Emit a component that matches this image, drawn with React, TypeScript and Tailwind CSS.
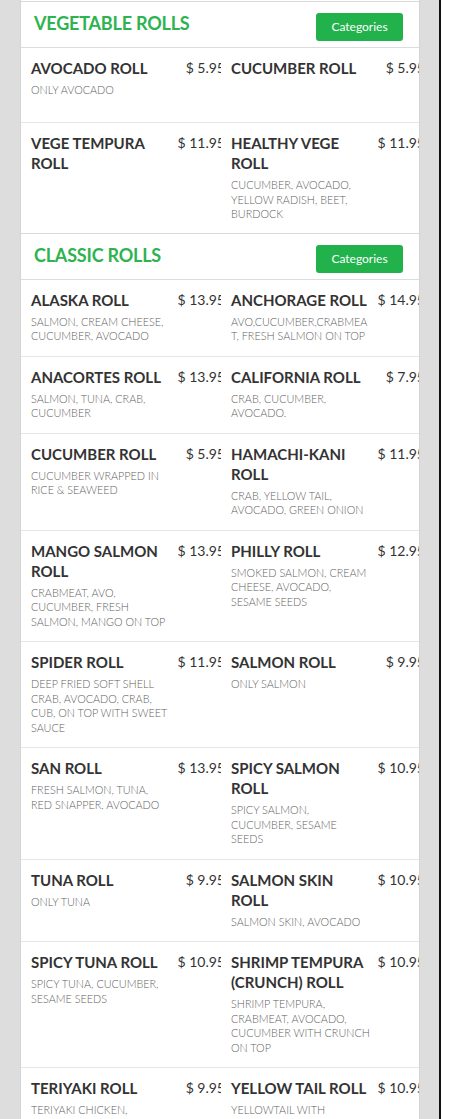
type Item = { name: string; price: string; desc?: string };

const vegetable: Item[] = [
  { name: "AVOCADO ROLL", price: "$ 5.95", desc: "ONLY AVOCADO" },
  { name: "CUCUMBER ROLL", price: "$ 5.95" },
  { name: "VEGE TEMPURA ROLL", price: "$ 11.95" },
  { name: "HEALTHY VEGE ROLL", price: "$ 11.95", desc: "CUCUMBER, AVOCADO, YELLOW RADISH, BEET, BURDOCK" },
];

const classic: Item[] = [
  { name: "ALASKA ROLL", price: "$ 13.95", desc: "SALMON, CREAM CHEESE, CUCUMBER, AVOCADO" },
  { name: "ANCHORAGE ROLL", price: "$ 14.95", desc: "AVO,CUCUMBER,CRABMEAT, FRESH SALMON ON TOP" },
  { name: "ANACORTES ROLL", price: "$ 13.95", desc: "SALMON, TUNA, CRAB, CUCUMBER" },
  { name: "CALIFORNIA ROLL", price: "$ 7.95", desc: "CRAB, CUCUMBER, AVOCADO." },
  { name: "CUCUMBER ROLL", price: "$ 5.95", desc: "CUCUMBER WRAPPED IN RICE & SEAWEED" },
  { name: "HAMACHI-KANI ROLL", price: "$ 11.95", desc: "CRAB, YELLOW TAIL, AVOCADO, GREEN ONION" },
  { name: "MANGO SALMON ROLL", price: "$ 13.95", desc: "CRABMEAT, AVO, CUCUMBER, FRESH SALMON, MANGO ON TOP" },
  { name: "PHILLY ROLL", price: "$ 12.95", desc: "SMOKED SALMON, CREAM CHEESE, AVOCADO, SESAME SEEDS" },
  { name: "SPIDER ROLL", price: "$ 11.95", desc: "DEEP FRIED SOFT SHELL CRAB, AVOCADO, CRAB, CUB, ON TOP WITH SWEET SAUCE" },
  { name: "SALMON ROLL", price: "$ 9.95", desc: "ONLY SALMON" },
  { name: "SAN ROLL", price: "$ 13.95", desc: "FRESH SALMON, TUNA, RED SNAPPER, AVOCADO" },
  { name: "SPICY SALMON ROLL", price: "$ 10.95", desc: "SPICY SALMON, CUCUMBER, SESAME SEEDS" },
  { name: "TUNA ROLL", price: "$ 9.95", desc: "ONLY TUNA" },
  { name: "SALMON SKIN ROLL", price: "$ 10.95", desc: "SALMON SKIN, AVOCADO" },
  { name: "SPICY TUNA ROLL", price: "$ 10.95", desc: "SPICY TUNA, CUCUMBER, SESAME SEEDS" },
  { name: "SHRIMP TEMPURA (CRUNCH) ROLL", price: "$ 10.95", desc: "SHRIMP TEMPURA, CRABMEAT, AVOCADO, CUCUMBER WITH CRUNCH ON TOP" },
  { name: "TERIYAKI ROLL", price: "$ 9.95", desc: "TERIYAKI CHICKEN, AVOCADO, CUCUMBER" },
  { name: "YELLOW TAIL ROLL", price: "$ 10.95", desc: "YELLOWTAIL WITH SCALLION, CUCUMBER" },
];

function MenuItem({ item }: { item: Item }) {
  return (
    <div className="overflow-hidden">
      <div className="flex w-[204px] pl-[10px]">
        <div className="w-[139px] shrink-0 [overflow-wrap:break-word]">
          <p className="text-[15px] font-bold leading-[20px] text-[#333]">{item.name}</p>
          {item.desc ? (
            <p className="mt-[5px] text-[10.8px] font-light leading-[14.5px] text-[#5f5f5f]">{item.desc}</p>
          ) : null}
        </div>
        <span className="ml-auto whitespace-nowrap text-[14px] leading-[20px] text-[#333]">{item.price}</span>
      </div>
    </div>
  );
}

function Section({ title, items }: { title: string; items: Item[] }) {
  const rows: Item[][] = [];
  for (let i = 0; i < items.length; i += 2) rows.push(items.slice(i, i + 2));

  return (
    <section className="border-t border-[#d9d9d9]">
      <div className="flex items-start justify-between border-b border-[#dcdcdc] pl-[13px] pr-[16px] pt-[7px] pb-[6px]">
        <h2 className="text-[18px] font-bold leading-[28px] tracking-[-0.2px] text-[#2eb350]">{title}</h2>
        <button
          type="button"
          className="mt-[4px] h-[28px] w-[87px] rounded-[3px] bg-[#22b24c] text-[12px] text-white"
        >
          Categories
        </button>
      </div>
      {rows.map((row, i) => (
        <div
          key={i}
          className={`grid min-h-[75px] grid-cols-[200px_1fr] pt-[10px] ${
            i === rows.length - 1 ? "pb-[11px]" : "border-b border-[#e6e6e6] pb-[12px]"
          }`}
        >
          {row.map((item) => (
            <MenuItem key={item.name} item={item} />
          ))}
        </div>
      ))}
    </section>
  );
}

export default function App() {
  return (
    <div className="flex min-h-screen bg-[#dddddd] font-['Lato',sans-serif]">
      <div className="w-[20px] shrink-0" />
      <main className="w-[400px] shrink-0 border-x border-[#d4d4d4] bg-white pt-px">
        <Section title="VEGETABLE ROLLS" items={vegetable} />
        <Section title="CLASSIC ROLLS" items={classic} />
      </main>
      <div className="w-[19px] shrink-0" />
      <div className="w-[2px] shrink-0 bg-[#111]" />
      <div className="flex-1 bg-white" />
    </div>
  );
}
